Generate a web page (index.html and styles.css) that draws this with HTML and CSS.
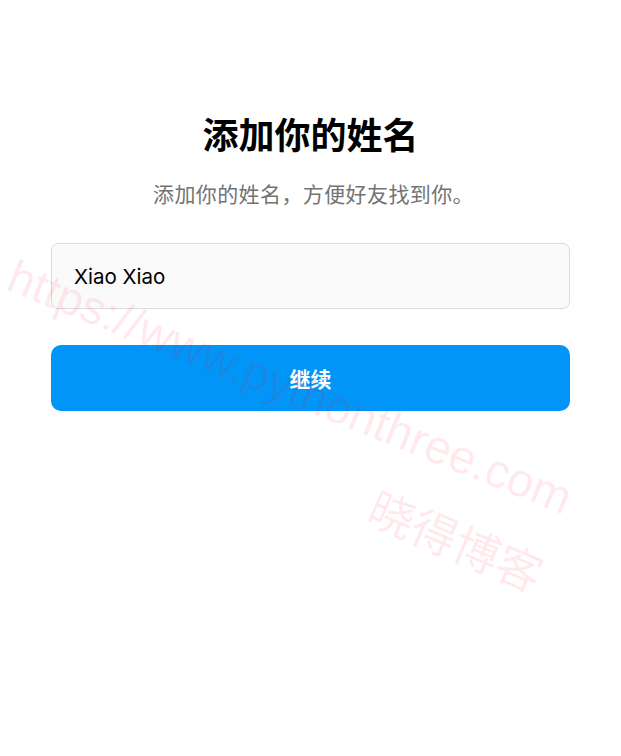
FILE: index.html
```html
<!DOCTYPE html>
<html lang="zh">
<head>
<meta charset="utf-8">
<link rel="stylesheet" href="styles.css">
</head>
<body>
<main class="page">
  <h1 class="title">添加你的姓名</h1>
  <p class="subtitle">添加你的姓名，方便好友找到你。</p>
  <div class="field">Xiao Xiao</div>
  <button class="btn">继续</button>
</main>
<div class="wm wm-url">https://www.pythonthree.com</div>
<div class="wm wm-cn">晓得博客</div>
</body>
</html>
```
FILE: styles.css
```css
html, body {
  margin: 0;
  padding: 0;
  background: #ffffff;
}
body {
  width: 621px;
  height: 756px;
  position: relative;
  overflow: hidden;
  font-family: Inter, "Noto Sans CJK SC", sans-serif;
}
.page {
  display: flex;
  flex-direction: column;
  align-items: stretch;
  padding: 107px 51px 0 51px;
}
.title {
  margin: 0;
  text-align: center;
  font-family: "Noto Sans CJK SC", sans-serif;
  font-size: 36px;
  font-weight: 700;
  line-height: 52px;
  color: #000;
}
.subtitle {
  margin: 19px 0 0 0;
  padding-left: 6px;
  text-align: center;
  font-family: "Noto Sans CJK SC", sans-serif;
  font-size: 21px;
  letter-spacing: 0.4px;
  line-height: 30px;
  color: #737373;
}
.field {
  margin-top: 35px;
  box-sizing: border-box;
  height: 66px;
  border: 1px solid #dbdbdb;
  border-radius: 7px;
  background: #fafafa;
  display: flex;
  align-items: center;
  padding-left: 22px;
  font-size: 20.5px;
  color: #000;
}
.btn {
  margin-top: 36px;
  height: 66px;
  border: none;
  border-radius: 10px;
  background: #0095f6;
  color: #fff;
  font-family: "Noto Sans CJK SC", sans-serif;
  font-size: 21px;
  font-weight: 700;
  padding: 0;
}
.wm {
  position: absolute;
  white-space: nowrap;
  color: rgba(255, 30, 70, 0.1);
  transform-origin: 0 0;
  transform: rotate(22deg);
  pointer-events: none;
}
.wm-url {
  left: 20px;
  top: 250px;
  font-family: "Liberation Sans", sans-serif;
  font-size: 47px;
  line-height: 52px;
}
.wm-cn {
  left: 382px;
  top: 480px;
  font-family: "Noto Sans CJK SC", sans-serif;
  font-size: 46px;
  line-height: 50px;
  transform: rotate(23deg);
}
```
